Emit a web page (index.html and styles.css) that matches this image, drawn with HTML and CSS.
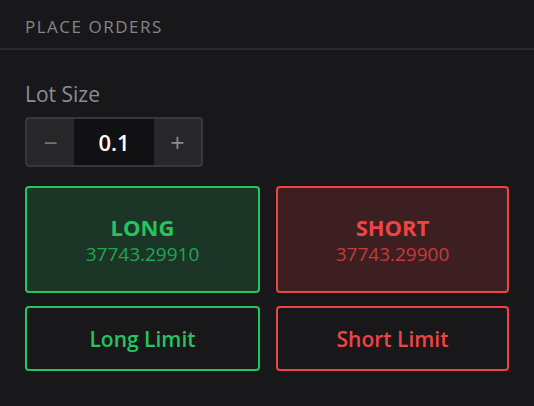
FILE: index.html
```html
<!DOCTYPE html>
<html>
<head>
<meta charset="utf-8">
<link rel="stylesheet" href="styles.css">
</head>
<body>
<div class="panel">
  <div class="header">PLACE ORDERS</div>
  <div class="content">
    <div class="label">Lot Size</div>
    <div class="stepper">
      <div class="step-btn minus">&minus;</div>
      <div class="step-value">0.1</div>
      <div class="step-btn plus">+</div>
    </div>
    <div class="grid">
      <div class="btn market long">
        <div class="side">LONG</div>
        <div class="price">37743.29910</div>
      </div>
      <div class="btn market short">
        <div class="side">SHORT</div>
        <div class="price">37743.29900</div>
      </div>
      <div class="btn limit long">Long Limit</div>
      <div class="btn limit short">Short Limit</div>
    </div>
  </div>
</div>
</body>
</html>
```
FILE: styles.css
```css
html, body {
  margin: 0;
  padding: 0;
  background: #18181b;
}
body {
  font-family: "Open Sans", "Noto Sans", sans-serif;
  width: 534px;
  height: 406px;
  overflow: hidden;
}
.header {
  height: 50px;
  box-sizing: border-box;
  padding: 15px 25px 0;
  font-size: 17px;
  line-height: 24px;
  letter-spacing: 1.5px;
  color: #85858c;
  border-bottom: 2px solid #2a2a2e;
}
.content {
  padding: 30px 25px 0;
}
.label {
  font-size: 21px;
  color: #8d8d93;
  line-height: 28px;
  margin-bottom: 9px;
}
.stepper {
  display: flex;
  width: 178px;
  height: 50px;
  box-sizing: border-box;
  border: 2px solid #38383c;
  border-radius: 4px;
  background: #27272a;
  overflow: hidden;
}
.step-btn {
  width: 48px;
  display: flex;
  align-items: center;
  justify-content: center;
  font-size: 25px;
  color: #8a8a90;
}
.step-btn.minus { color: #707077; }
.step-value {
  width: 80px;
  background: #111113;
  display: flex;
  align-items: center;
  justify-content: center;
  font-size: 22px;
  font-weight: 600;
  color: #ffffff;
}
.grid {
  margin-top: 19px;
  display: grid;
  grid-template-columns: 235px 233px;
  grid-template-rows: 107px 65px;
  column-gap: 16px;
  row-gap: 13px;
}
.btn {
  box-sizing: border-box;
  border: 2px solid;
  border-radius: 4px;
  display: flex;
  flex-direction: column;
  align-items: center;
  justify-content: center;
}
.btn.long { border-color: #22c55e; color: #22c55e; }
.btn.short { border-color: #ef4444; color: #ef4444; }
.market.long { background: #1b3527; }
.market.short { background: #3d1f21; }
.limit { background: #18181b; font-size: 21px; font-weight: 600; }
.side {
  font-size: 22px;
  font-weight: 700;
  line-height: 28px;
}
.price {
  font-size: 19px;
  line-height: 26px;
}
.long .price { color: #1fa653; }
.short .price { color: #c53a3c; }
```
